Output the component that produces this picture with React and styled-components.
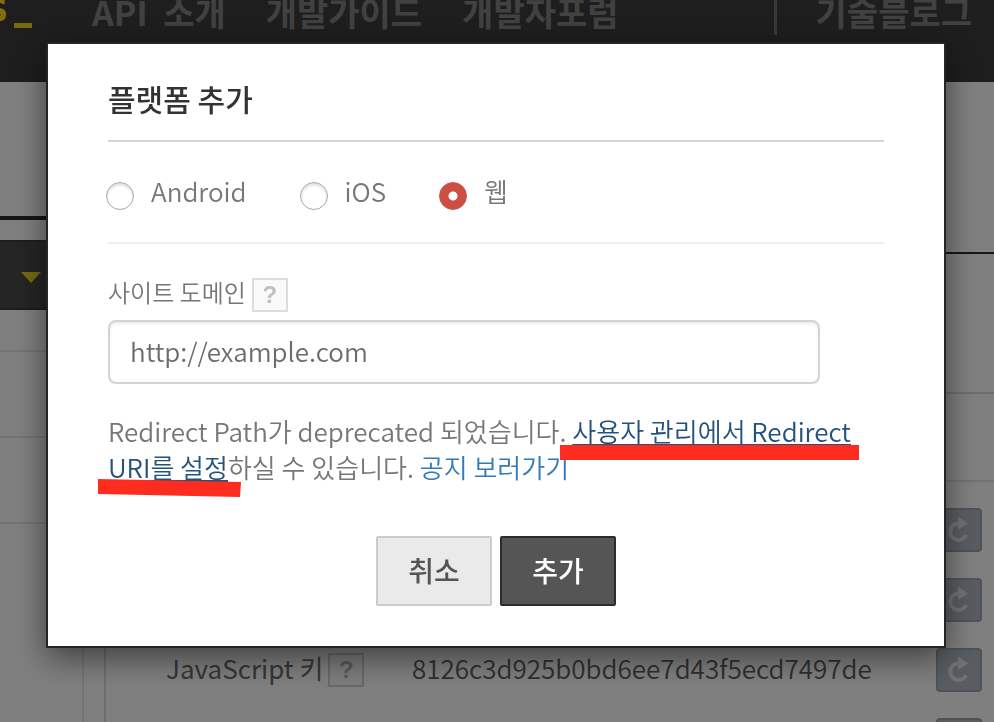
import React from "react";
import styled, { createGlobalStyle } from "styled-components";

const Global = createGlobalStyle`
  *, *::before, *::after { box-sizing: border-box; }
  body {
    margin: 0;
    background: #fff;
    color: #777;
    font-family: "Noto Sans CJK KR", "Noto Sans", sans-serif;
    font-weight: 350;
    overflow: hidden;
  }
  button, input { font-family: inherit; font-weight: inherit; }
`;

const Page = styled.div`
  height: 100vh;
  display: flex;
  flex-direction: column;
  overflow: hidden;
`;

const Header = styled.header`
  display: flex;
  align-items: flex-start;
  flex: none;
  height: 82px;
  background: #3c3c3c;
  overflow: hidden;
`;

const Logo = styled.a`
  display: flex;
  align-items: flex-end;
  gap: 5px;
  width: 107px;
  height: 38px;
  margin-left: -15px;
  margin-top: -10px;
  flex: none;
  color: #ffde24;
  font: bold 40px/42px "DejaVu Sans Mono", monospace;
  text-decoration: none;
`;

const LogoCursor = styled.span`
  width: 18px;
  height: 5px;
  background: #f0d020;
`;

const TopNav = styled.nav`
  display: flex;
  gap: 40px;
  margin-top: -13px;
  flex: 1;
`;

const TopLink = styled.a`
  color: #828282;
  font-size: 34px;
  font-weight: 700;
  line-height: 50px;
  white-space: pre;
  text-decoration: none;
`;

const BlogArea = styled.div`
  height: 35px;
  padding: 0 22px 0 39px;
  border-left: 3px solid #707070;
  display: flex;
  align-items: flex-end;

  ${TopLink} { margin-bottom: -2px; }
`;

const Columns = styled.div`
  display: grid;
  grid-template-columns: 84px 1fr;
  gap: 20px;
  flex: 1;
  min-height: 0;
`;

const Sidebar = styled.aside`
  border-right: 2px solid #e8e8e8;
`;

const SideHead = styled.div`
  height: 138px;
  border-bottom: 4px solid #2c2c2c;
  margin-bottom: 20px;
`;

const SideToggle = styled.button`
  display: flex;
  align-items: center;
  width: 100%;
  height: 70px;
  padding: 4px 0 0 21px;
  border: 0;
  border-top: 2px solid #3a3a3a;
  border-bottom: 2px solid #383838;
  background: #4a4a4a;
`;

const SideItem = styled.div`
  height: ${(p) => (p.$short ? 42 : 86)}px;
  border-bottom: 2px solid #e6e6e6;
`;

const Main = styled.main`
  border-left: 2px solid #dcdcdc;
`;

const Band = styled.div`
  height: ${(p) => p.$h}px;
  border-bottom: 2px solid ${(p) => p.$line};
`;

const KeyList = styled.div`
  padding-top: 13px;
`;

const KeyRow = styled.div`
  display: flex;
  align-items: center;
  height: 70px;
  padding-right: 12px;
`;

const KeyName = styled.div`
  display: flex;
  align-items: center;
  gap: 5px;
  width: 246px;
  margin-left: 60px;
  color: #6c6c6c;
  font-size: 26px;
  font-weight: 400;
  line-height: 36px;
  white-space: nowrap;
`;

const KeyText = styled.span`
  padding-bottom: 5px;
`;

const KeyValue = styled.div`
  padding-bottom: 5px;
  color: #606060;
  font-size: 26px;
  line-height: 36px;
`;

const Reload = styled.button`
  display: flex;
  align-items: center;
  width: 46px;
  height: 44px;
  margin-left: auto;
  padding: 0 0 0 10px;
  border: 2px solid #9fa6af;
  border-radius: 4px;
  background: #b2b9c3;
`;

const Help = styled.button`
  flex: none;
  width: 36px;
  height: 34px;
  padding: 0;
  border: 2px solid ${(p) => (p.$dim ? "#d2d2d2" : "#ddd")};
  background: #fafafa;
  color: ${(p) => (p.$dim ? "#b4b4b4" : "#c0c0c0")};
  font: bold 24px/30px "Liberation Sans", sans-serif;
`;

const Overlay = styled.div`
  position: fixed;
  inset: 0;
  padding: 42px 48px 0 46px;
  background: rgba(0, 0, 0, 0.5);
`;

const Dialog = styled.form`
  padding: 30px 60px 40px;
  border: 2px solid #262626;
  background: #fff;
  box-shadow: 0 10px 30px rgba(0, 0, 0, 0.5);
`;

const Title = styled.h2`
  margin: 0;
  padding-bottom: 18px;
  border-bottom: 2px solid #d5d5d5;
  color: #333;
  font-size: 30px;
  font-weight: 500;
  line-height: 48px;
`;

const Platforms = styled.fieldset`
  display: flex;
  height: 102px;
  margin: 0;
  padding: 30px 0 0;
  border: 0;
  border-bottom: 2px solid #eee;
`;

const Choice = styled.label`
  display: flex;
  align-items: flex-start;
  gap: 17px;
  margin-left: -2px;
  margin-right: 55px;
  font-size: 26px;
  line-height: 38px;
`;

const Radio = styled.input`
  appearance: none;
  flex: none;
  width: 28px;
  height: 28px;
  margin: 10px 0 0;
  border: 1px solid #aaa;
  border-radius: 50%;
  background: #fff;
  box-shadow: inset 0 2px 3px rgba(0, 0, 0, 0.15);

  &:checked {
    border-color: #cd4e45;
    background: radial-gradient(circle, #fff 0 4px, #cd4e45 5px);
    box-shadow: none;
  }
`;

const FieldHead = styled.div`
  display: flex;
  gap: 6px;
  height: 34px;
  margin-top: 34px;
  margin-bottom: 8px;
`;

const FieldLabel = styled.label`
  font-size: 24px;
  line-height: 28px;
`;

const TextBox = styled.input`
  display: block;
  width: 100%;
  max-width: 712px;
  height: 64px;
  padding: 0 20px 4px;
  border: 2px solid #d3d3d3;
  border-radius: 8px;
  box-shadow: inset 0 2px 3px rgba(0, 0, 0, 0.08);
  color: #777;
  font-size: 26px;

  &::placeholder { color: #6c6c6c; opacity: 1; }
`;

const Note = styled.p`
  position: relative;
  margin: 29px 0 51px;
  font-size: 26px;
  line-height: 36px;
`;

const NoteLink = styled.a`
  color: ${(p) => (p.$hover ? "#23527c" : "#337ab7")};
  text-decoration: ${(p) => (p.$hover ? "underline" : "none")};
  text-decoration-thickness: 2px;
  text-underline-offset: 2px;
  text-decoration-skip-ink: none;
`;

const Marks = styled.svg`
  position: absolute;
  left: -10px;
  top: 0;
  pointer-events: none;
`;

const Actions = styled.div`
  display: flex;
  justify-content: center;
  gap: 8px;
`;

const Action = styled.button`
  width: 116px;
  height: 70px;
  padding: 0 0 2px;
  border: 2px solid ${(p) => (p.$primary ? "#2c2c2c" : "#ccc")};
  border-radius: 2px;
  background: ${(p) => (p.$primary ? "#555" : "#eaeaea")};
  color: ${(p) => (p.$primary ? "#fff" : "#555")};
  font-size: 28px;
  font-weight: 500;
`;

const ReloadButton = () => (
  <Reload type="button" aria-label="새로고침">
    <svg width="20" height="28" viewBox="0 0 20 28">
      <path d="M10 7.5A8.2 8.2 0 1 0 18 19" fill="none" stroke="#e4e4e4" strokeWidth="4" />
      <path d="M10 0.5L20 7.5L10 14Z" fill="#e4e4e4" />
    </svg>
  </Reload>
);

export default function App() {
  return (
    <>
      <Global />
      <Page>
        <Header>
          <Logo href="#">s<LogoCursor /></Logo>
          <TopNav>
            <TopLink href="#">{"API  소개"}</TopLink>
            <TopLink href="#">개발가이드</TopLink>
            <TopLink href="#">개발자포럼</TopLink>
          </TopNav>
          <BlogArea>
            <TopLink href="#">기술블로그</TopLink>
          </BlogArea>
        </Header>
        <Columns>
          <Sidebar>
            <SideHead />
            <SideToggle type="button" aria-label="메뉴">
              <svg width="20" height="11" viewBox="0 0 20 11">
                <path d="M0 0H20L10 11Z" fill="#ecd21e" />
              </svg>
            </SideToggle>
            <SideItem $short />
            <SideItem />
            <SideItem />
          </Sidebar>
          <Main>
            <Band $h={172} $line="#2c2c2c" />
            <Band $h={140} $line="#dcdcdc" />
            <Band $h={88} $line="#e4e4e4" />
            <KeyList>
              <KeyRow><ReloadButton /></KeyRow>
              <KeyRow><ReloadButton /></KeyRow>
              <KeyRow>
                <KeyName>
                  <KeyText>JavaScript 키</KeyText>
                  <Help type="button" $dim>?</Help>
                </KeyName>
                <KeyValue>8126c3d925b0bd6ee7d43f5ecd7497de</KeyValue>
                <ReloadButton />
              </KeyRow>
              <KeyRow><ReloadButton /></KeyRow>
            </KeyList>
          </Main>
        </Columns>
      </Page>
      <Overlay>
        <Dialog role="dialog" aria-labelledby="dialog-title" onSubmit={(e) => e.preventDefault()}>
          <Title id="dialog-title">플랫폼 추가</Title>
          <Platforms>
            <Choice><Radio type="radio" name="platform" value="android" />Android</Choice>
            <Choice><Radio type="radio" name="platform" value="ios" />iOS</Choice>
            <Choice><Radio type="radio" name="platform" value="web" defaultChecked />웹</Choice>
          </Platforms>
          <FieldHead>
            <FieldLabel htmlFor="domain">사이트 도메인</FieldLabel>
            <Help type="button">?</Help>
          </FieldHead>
          <TextBox id="domain" type="text" placeholder="http://example.com" />
          <Note>
            Redirect Path가 deprecated 되었습니다.{" "}
            <NoteLink href="#" $hover>사용자 관리에서 Redirect URI를 설정</NoteLink>
            하실 수 있습니다. <NoteLink href="#">공지 보러가기</NoteLink>
            <Marks width="762" height="86" viewBox="0 0 762 86" aria-hidden="true">
              <path d="M462 32H761V47H462Z" fill="#fe2c1e" />
              <path d="M0 66L143 69L142 84L0 81Z" fill="#fe2c1e" />
            </Marks>
          </Note>
          <Actions>
            <Action type="button">취소</Action>
            <Action type="submit" $primary>추가</Action>
          </Actions>
        </Dialog>
      </Overlay>
    </>
  );
}
